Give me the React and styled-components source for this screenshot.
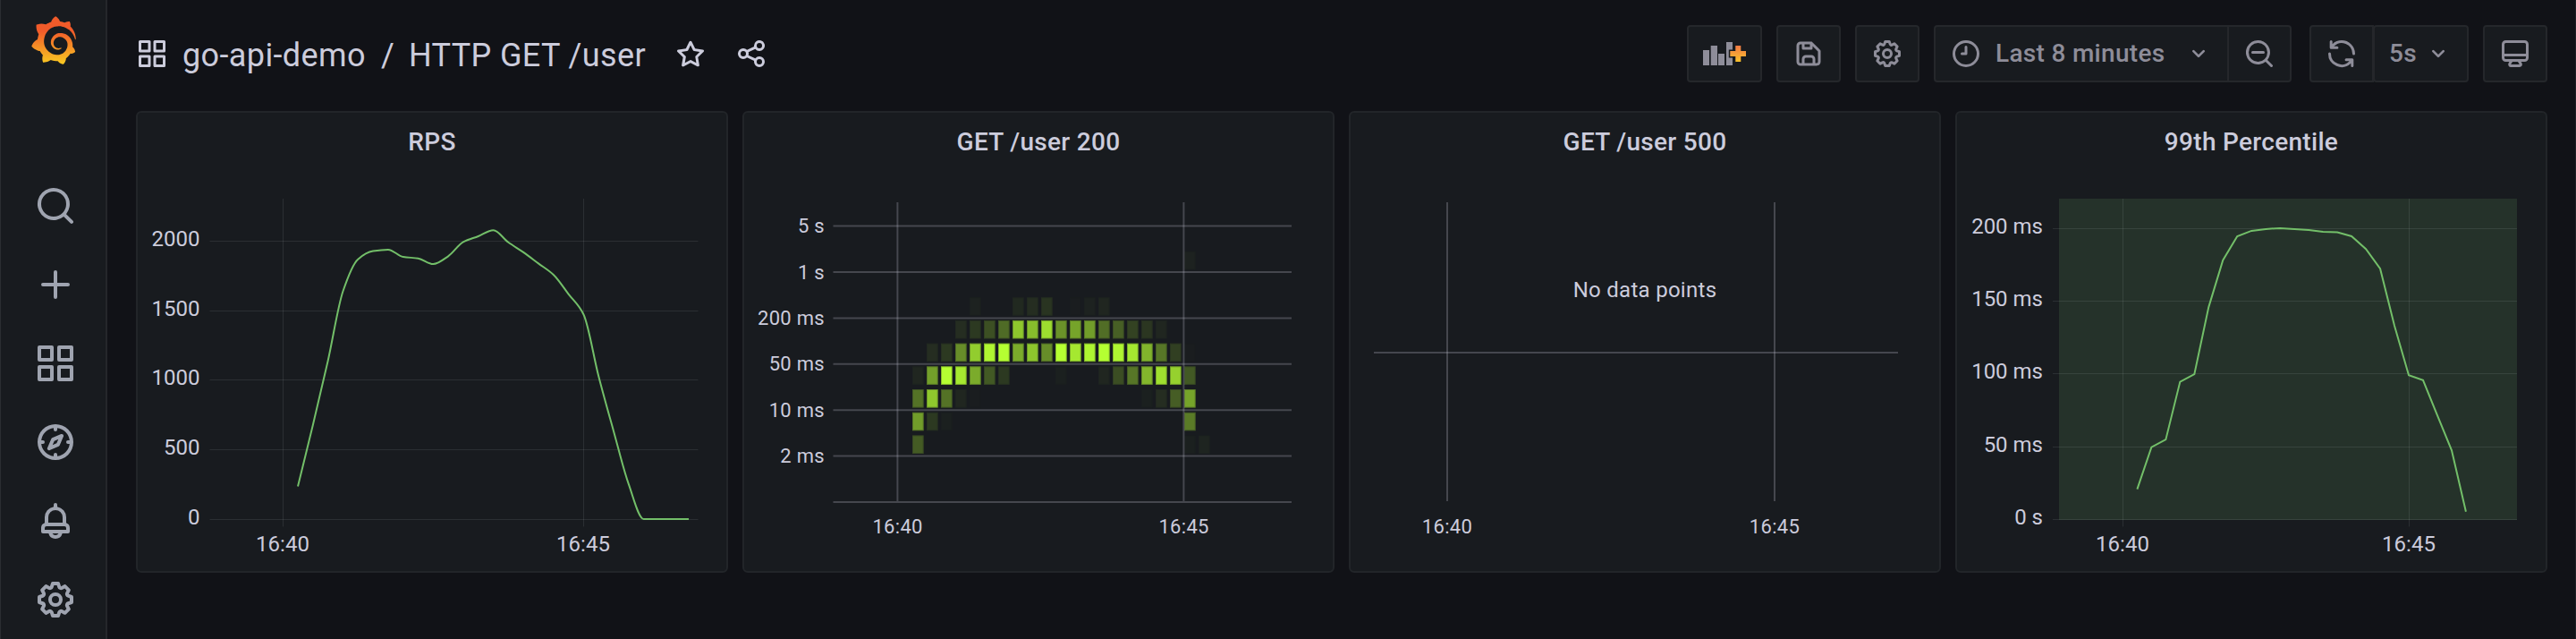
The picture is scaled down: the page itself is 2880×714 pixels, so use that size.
import React from 'react';
import styled, { createGlobalStyle, css } from 'styled-components';

const GlobalStyle = createGlobalStyle`
  * { box-sizing: border-box; }
  body {
    margin: 0;
    background: #111217;
    color: #ccccdc;
    font-family: Roboto, "Liberation Sans", sans-serif;
    letter-spacing: 0.3px;
    overflow: hidden;
  }
`;

/* ---------- icons ---------- */

const paths = {
  apps: 'M10,13H3a1,1,0,0,0-1,1v7a1,1,0,0,0,1,1h7a1,1,0,0,0,1-1V14A1,1,0,0,0,10,13ZM9,20H4V15H9ZM21,2H14a1,1,0,0,0-1,1v7a1,1,0,0,0,1,1h7a1,1,0,0,0,1-1V3A1,1,0,0,0,21,2ZM20,9H15V4h5Zm1,4H14a1,1,0,0,0-1,1v7a1,1,0,0,0,1,1h7a1,1,0,0,0,1-1V14A1,1,0,0,0,21,13Zm-1,7H15V15h5ZM10,2H3A1,1,0,0,0,2,3v7a1,1,0,0,0,1,1h7a1,1,0,0,0,1-1V3A1,1,0,0,0,10,2ZM9,9H4V4H9Z',
  search: 'M21.71,20.29,18,16.61A9,9,0,1,0,16.61,18l3.68,3.68a1,1,0,0,0,1.42,0A1,1,0,0,0,21.71,20.29ZM11,18a7,7,0,1,1,7-7A7,7,0,0,1,11,18Z',
  plus: 'M19,11H13V5a1,1,0,0,0-2,0v6H5a1,1,0,0,0,0,2h6v6a1,1,0,0,0,2,0V13h6a1,1,0,0,0,0-2Z',
  compass: 'M12,2A10,10,0,1,0,22,12,10,10,0,0,0,12,2Zm1,17.93V19a1,1,0,0,0-2,0v.93A8,8,0,0,1,4.07,13H5a1,1,0,0,0,0-2H4.07A8,8,0,0,1,11,4.07V5a1,1,0,0,0,2,0V4.07A8,8,0,0,1,19.93,11H19a1,1,0,0,0,0,2h.93A8,8,0,0,1,13,19.93ZM15.14,7.55l-5,2.12a1,1,0,0,0-.52.52l-2.12,5a1,1,0,0,0,.21,1.1,1,1,0,0,0,.7.3.93.93,0,0,0,.4-.09l5-2.12a1,1,0,0,0,.52-.52l2.12-5a1,1,0,0,0-1.31-1.31Zm-2.49,5.1-2.28,1,1-2.28,2.28-1Z',
  bell: 'M18,13.18V10a6,6,0,0,0-5-5.91V3a1,1,0,0,0-2,0V4.09A6,6,0,0,0,6,10v3.18A3,3,0,0,0,4,16v2a1,1,0,0,0,1,1H8.14a4,4,0,0,0,7.72,0H19a1,1,0,0,0,1-1V16A3,3,0,0,0,18,13.18ZM8,10a4,4,0,0,1,8,0v3H8Zm4,10a2,2,0,0,1-1.72-1h3.44A2,2,0,0,1,12,20Zm6-3H6V16a1,1,0,0,1,1-1H17a1,1,0,0,1,1,1Z',
  cog: 'M21.32,9.55l-1.89-.63.89-1.78A1,1,0,0,0,20.13,6L18,3.87a1,1,0,0,0-1.15-.19l-1.78.89-.63-1.89A1,1,0,0,0,13.5,2h-3a1,1,0,0,0-.95.68L8.92,4.57,7.14,3.68A1,1,0,0,0,6,3.87L3.87,6a1,1,0,0,0-.19,1.15l.89,1.78-1.89.63A1,1,0,0,0,2,10.5v3a1,1,0,0,0,.68.95l1.89.63-.89,1.78A1,1,0,0,0,3.87,18L6,20.13a1,1,0,0,0,1.15.19l1.78-.89.63,1.89a1,1,0,0,0,.95.68h3a1,1,0,0,0,.95-.68l.63-1.89,1.78.89A1,1,0,0,0,18,20.13L20.13,18a1,1,0,0,0,.19-1.15l-.89-1.78,1.89-.63A1,1,0,0,0,22,13.5v-3A1,1,0,0,0,21.32,9.55ZM20,12.78l-1.2.4A2,2,0,0,0,17.64,16l.57,1.14-1.1,1.1L16,17.64a2,2,0,0,0-2.79,1.16l-.4,1.2H11.22l-.4-1.2A2,2,0,0,0,8,17.64l-1.14.57-1.1-1.1L6.36,16A2,2,0,0,0,5.2,13.18L4,12.78V11.22l1.2-.4A2,2,0,0,0,6.36,8L5.79,6.89l1.1-1.1L8,6.36A2,2,0,0,0,10.82,5.2l.4-1.2h1.56l.4,1.2A2,2,0,0,0,16,6.36l1.14-.57,1.1,1.1L17.64,8a2,2,0,0,0,1.16,2.79l1.2.4ZM12,8a4,4,0,1,0,4,4A4,4,0,0,0,12,8Zm0,6a2,2,0,1,1,2-2A2,2,0,0,1,12,14Z',
  star: 'M22,9.67A1,1,0,0,0,21.14,9l-5.69-.83L12.9,3a1,1,0,0,0-1.8,0L8.55,8.16,2.86,9a1,1,0,0,0-.81.68,1,1,0,0,0,.25,1l4.13,4-1,5.68A1,1,0,0,0,6.9,21.44L12,18.77l5.1,2.67a.93.93,0,0,0,.46.12,1,1,0,0,0,.59-.19,1,1,0,0,0,.4-1l-1-5.68,4.13-4A1,1,0,0,0,22,9.67Zm-6.15,4a1,1,0,0,0-.29.88l.72,4.2-3.76-2a1.06,1.06,0,0,0-.94,0l-3.76,2,.72-4.2a1,1,0,0,0-.29-.88l-3-3,4.21-.61a1,1,0,0,0,.76-.55L12,5.7l1.88,3.82a1,1,0,0,0,.76.55l4.21.61Z',
  share: 'M18,14a4,4,0,0,0-3.08,1.48l-5.1-2.35a3.64,3.64,0,0,0,0-2.26l5.1-2.35A4,4,0,1,0,14,6a4.17,4.17,0,0,0,.07.71L8.79,9.14a4,4,0,1,0,0,5.72l5.28,2.43A4.17,4.17,0,0,0,14,18a4,4,0,1,0,4-4ZM18,4a2,2,0,1,1-2,2A2,2,0,0,1,18,4ZM6,14a2,2,0,1,1,2-2A2,2,0,0,1,6,14Zm12,6a2,2,0,1,1,2-2A2,2,0,0,1,18,20Z',
  save: 'M20.71,9.29l-6-6a1,1,0,0,0-.32-.21A1.09,1.09,0,0,0,14,3H6A3,3,0,0,0,3,6V18a3,3,0,0,0,3,3H18a3,3,0,0,0,3-3V10A1,1,0,0,0,20.71,9.29ZM9,5h4V7H9Zm6,14H9V16a1,1,0,0,1,1-1h4a1,1,0,0,1,1,1Zm4-1a1,1,0,0,1-1,1H17V16a3,3,0,0,0-3-3H10a3,3,0,0,0-3,3v3H6a1,1,0,0,1-1-1V6A1,1,0,0,1,6,5H7V8A1,1,0,0,0,8,9h6a1,1,0,0,0,1-1V6.41l4,4Z',
  clock: 'M12,6a1,1,0,0,0-1,1v4H9a1,1,0,0,0,0,2h3a1,1,0,0,0,1-1V7A1,1,0,0,0,12,6Zm0-4A10,10,0,1,0,22,12,10,10,0,0,0,12,2Zm0,18a8,8,0,1,1,8-8A8,8,0,0,1,12,20Z',
  angleDown: 'M17,9.17a1,1,0,0,0-1.41,0L12,12.71,8.46,9.17a1,1,0,0,0-1.41,0,1,1,0,0,0,0,1.42l4.24,4.24a1,1,0,0,0,1.42,0L17,10.59A1,1,0,0,0,17,9.17Z',
  searchMinus: 'M21.71,20.29,18,16.61A9,9,0,1,0,16.61,18l3.68,3.68a1,1,0,0,0,1.42,0A1,1,0,0,0,21.71,20.29ZM11,18a7,7,0,1,1,7-7A7,7,0,0,1,11,18Zm4-8H7a1,1,0,0,0,0,2h8a1,1,0,0,0,0-2Z',
  sync: 'M19.91,15.51H15.38a1,1,0,0,0,0,2h2.4A8,8,0,0,1,4,12a1,1,0,1,0-2,0,10,10,0,0,0,16.88,7.23V21a1,1,0,0,0,2,0V16.5A1,1,0,0,0,19.91,15.51ZM12,2A10,10,0,0,0,5.12,4.77V3a1,1,0,0,0-2,0V7.5a1,1,0,0,0,1,1h4.5a1,1,0,0,0,0-2H6.22A8,8,0,0,1,20,12a1,1,0,0,0,2,0A10,10,0,0,0,12,2Z',
  monitor: 'M19,2H5A3,3,0,0,0,2,5V15a3,3,0,0,0,3,3H7.64l-.58,1a2,2,0,0,0,0,2,2,2,0,0,0,1.75,1h6.46A2,2,0,0,0,17,21a2,2,0,0,0,0-2l-.59-1H19a3,3,0,0,0,3-3V5A3,3,0,0,0,19,2ZM8.77,20,10,18H14l1.2,2ZM20,15a1,1,0,0,1-1,1H5a1,1,0,0,1-1-1V14H20Zm0-3H4V5A1,1,0,0,1,5,4H19a1,1,0,0,1,1,1Z',
};

const IconSvg = styled.svg`
  display: block;
  flex: none;
  width: ${(p) => p.$size}px;
  height: ${(p) => p.$size}px;
  fill: currentColor;
`;

const Icon = ({ name, size = 36 }) => (
  <IconSvg $size={size} viewBox="0 0 24 24">
    <path d={paths[name]} />
  </IconSvg>
);

const LOGO =
  'M342,161.2c-0.6-6.1-1.6-13.1-3.6-20.9c-2-7.7-5-16.2-9.4-25c-4.4-8.8-10.1-17.9-17.5-26.8c-2.9-3.5-6.1-6.9-9.5-10.2c5.1-20.3-6.2-37.9-6.2-37.9c-19.5-1.2-31.9,6.1-36.5,9.4c-0.8-0.3-1.5-0.7-2.3-1c-3.3-1.3-6.7-2.6-10.3-3.7c-3.5-1.1-7.1-2.1-10.8-3c-3.7-0.9-7.4-1.6-11.2-2.2c-0.7-0.1-1.3-0.2-2-0.3c-8.5-27.2-32.9-38.6-32.9-38.6c-27.3,17.3-32.4,41.5-32.4,41.5s-0.1,0.5-0.3,1.4c-1.5,0.4-3,0.9-4.5,1.3c-2.1,0.6-4.2,1.4-6.2,2.2c-2.1,0.8-4.1,1.6-6.2,2.5c-4.1,1.8-8.2,3.8-12.2,6c-3.9,2.2-7.7,4.6-11.4,7.1c-0.5-0.2-1-0.4-1-0.4c-37.8-14.4-71.3,2.9-71.3,2.9c-3.1,40.2,15.1,65.5,18.7,70.1c-0.9,2.5-1.7,5-2.5,7.5c-2.8,9.1-4.9,18.4-6.2,28.1c-0.2,1.4-0.4,2.8-0.5,4.2C18.8,192.7,8.5,228,8.5,228c29.1,33.5,63.1,35.6,63.1,35.6c0,0,0.1-0.1,0.1-0.1c4.3,7.7,9.3,15,14.9,21.9c2.4,2.9,4.8,5.6,7.4,8.3c-10.6,30.4,1.5,55.6,1.5,55.6c32.4,1.2,53.7-14.2,58.2-17.7c3.2,1.1,6.5,2.1,9.8,2.9c10,2.6,20.2,4.1,30.4,4.5c2.5,0.1,5.1,0.2,7.6,0.1l1.2,0l0.8,0l1.6,0l1.6-0.1l0,0.1c15.3,21.8,42.1,24.9,42.1,24.9c19.1-20.1,20.2-40.1,20.2-44.4l0,0c0,0,0-0.1,0-0.3c0-0.4,0-0.6,0-0.6l0,0c0-0.3,0-0.6,0-0.9c4-2.8,7.8-5.8,11.4-9.1c7.6-6.9,14.3-14.8,19.9-23.3c0.5-0.8,1-1.6,1.5-2.4c21.6,1.2,36.9-13.4,36.9-13.4c-3.6-22.5-16.4-33.5-19.1-35.6l0,0c0,0-0.1-0.1-0.3-0.2c-0.2-0.1-0.2-0.2-0.2-0.2c0,0,0,0,0,0c-0.1-0.1-0.3-0.2-0.5-0.3c0.1-1.4,0.2-2.7,0.3-4.1c0.2-2.4,0.2-4.9,0.2-7.3l0-1.8l0-0.9l0-0.5c0-0.6,0-0.4,0-0.6l-0.1-1.5l-0.1-2c0-0.7-0.1-1.3-0.2-1.9c-0.1-0.6-0.1-1.3-0.2-1.9l-0.2-1.9l-0.3-1.9c-0.4-2.5-0.8-4.9-1.4-7.4c-2.3-9.7-6.1-18.9-11-27.2c-5-8.3-11.2-15.6-18.3-21.8c-7-6.2-14.9-11.2-23.1-14.9c-8.3-3.7-16.9-6.1-25.5-7.2c-4.3-0.6-8.6-0.8-12.9-0.7l-1.6,0l-0.4,0c-0.1,0-0.6,0-0.5,0l-0.7,0l-1.6,0.1c-0.6,0-1.2,0.1-1.7,0.1c-2.2,0.2-4.4,0.5-6.5,0.9c-8.6,1.6-16.7,4.7-23.8,9c-7.1,4.3-13.3,9.6-18.3,15.6c-5,6-8.9,12.7-11.6,19.6c-2.7,6.9-4.2,14.1-4.6,21c-0.1,1.7-0.1,3.5-0.1,5.2c0,0.4,0,0.9,0,1.3l0.1,1.4c0.1,0.8,0.1,1.7,0.2,2.5c0.3,3.5,1,6.9,1.9,10.1c1.9,6.5,4.9,12.4,8.6,17.4c3.7,5,8.2,9.1,12.9,12.4c4.7,3.2,9.8,5.5,14.8,7c5,1.5,10,2.1,14.7,2.1c0.6,0,1.2,0,1.7,0c0.3,0,0.6,0,0.9,0c0.3,0,0.6,0,0.9-0.1c0.5,0,1-0.1,1.5-0.1c0.1,0,0.3,0,0.4-0.1l0.5-0.1c0.3,0,0.6-0.1,0.9-0.1c0.6-0.1,1.1-0.2,1.7-0.3c0.6-0.1,1.1-0.2,1.6-0.4c1.1-0.2,2.1-0.6,3.1-0.9c2-0.7,4-1.5,5.7-2.4c1.8-0.9,3.4-2,5-3c0.4-0.3,0.9-0.6,1.3-1c1.6-1.3,1.9-3.7,0.6-5.3c-1.1-1.4-3.1-1.8-4.7-0.9c-0.4,0.2-0.8,0.4-1.2,0.6c-1.4,0.7-2.8,1.3-4.3,1.8c-1.5,0.5-3.1,0.9-4.7,1.2c-0.8,0.1-1.6,0.2-2.5,0.3c-0.4,0-0.8,0.1-1.3,0.1c-0.4,0-0.9,0-1.2,0c-0.4,0-0.8,0-1.2,0c-0.5,0-1,0-1.5-0.1c0,0-0.3,0-0.1,0l-0.2,0l-0.3,0c-0.2,0-0.5,0-0.7-0.1c-0.5-0.1-0.9-0.1-1.4-0.2c-3.7-0.5-7.4-1.6-10.9-3.2c-3.6-1.6-7-3.8-10.1-6.6c-3.1-2.8-5.8-6.1-7.9-9.9c-2.1-3.8-3.6-8-4.3-12.4c-0.3-2.2-0.5-4.5-0.4-6.7c0-0.6,0.1-1.2,0.1-1.8c0,0.2,0-0.1,0-0.1l0-0.2l0-0.5c0-0.3,0.1-0.6,0.1-0.9c0.1-1.2,0.3-2.4,0.5-3.6c1.7-9.6,6.5-19,13.9-26.1c1.9-1.8,3.9-3.4,6-4.9c2.1-1.5,4.4-2.8,6.8-3.9c2.4-1.1,4.8-2,7.4-2.7c2.5-0.7,5.1-1.1,7.8-1.4c1.3-0.1,2.6-0.2,4-0.2c0.4,0,0.6,0,0.9,0l1.1,0l0.7,0c0.3,0,0,0,0.1,0l0.3,0l1.1,0.1c2.9,0.2,5.7,0.6,8.5,1.3c5.6,1.2,11.1,3.3,16.2,6.1c10.2,5.7,18.9,14.5,24.2,25.1c2.7,5.3,4.6,11,5.5,16.9c0.2,1.5,0.4,3,0.5,4.5l0.1,1.1l0.1,1.1c0,0.4,0,0.8,0,1.1c0,0.4,0,0.8,0,1.1l0,1l0,1.1c0,0.7-0.1,1.9-0.1,2.6c-0.1,1.6-0.3,3.3-0.5,4.9c-0.2,1.6-0.5,3.2-0.8,4.8c-0.3,1.6-0.7,3.2-1.1,4.7c-0.8,3.1-1.8,6.2-3,9.3c-2.4,6-5.6,11.8-9.4,17.1c-7.7,10.6-18.2,19.2-30.2,24.7c-6,2.7-12.3,4.7-18.8,5.7c-3.2,0.6-6.5,0.9-9.8,1l-0.6,0l-0.5,0l-1.1,0l-1.6,0l-0.8,0c0.4,0-0.1,0-0.1,0l-0.3,0c-1.8,0-3.5-0.1-5.3-0.3c-7-0.5-13.9-1.8-20.7-3.7c-6.7-1.9-13.2-4.6-19.4-7.8c-12.3-6.6-23.4-15.6-32-26.5c-4.3-5.4-8.1-11.3-11.2-17.4c-3.1-6.1-5.6-12.6-7.4-19.1c-1.8-6.6-2.9-13.3-3.4-20.1l-0.1-1.3l0-0.3l0-0.3l0-0.6l0-1.1l0-0.3l0-0.4l0-0.8l0-1.6l0-0.3c0,0,0,0.1,0-0.1l0-0.6c0-0.8,0-1.7,0-2.5c0.1-3.3,0.4-6.8,0.8-10.2c0.4-3.4,1-6.9,1.7-10.3c0.7-3.4,1.5-6.8,2.5-10.2c1.9-6.7,4.3-13.2,7.1-19.3c5.7-12.2,13.1-23.1,22-31.8c2.2-2.2,4.5-4.2,6.9-6.2c2.4-1.9,4.9-3.7,7.5-5.4c2.5-1.7,5.2-3.2,7.9-4.6c1.3-0.7,2.7-1.4,4.1-2c0.7-0.3,1.4-0.6,2.1-0.9c0.7-0.3,1.4-0.6,2.1-0.9c2.8-1.2,5.7-2.2,8.7-3.1c0.7-0.2,1.5-0.4,2.2-0.7c0.7-0.2,1.5-0.4,2.2-0.6c1.5-0.4,3-0.8,4.5-1.1c0.7-0.2,1.5-0.3,2.3-0.5c0.8-0.2,1.5-0.3,2.3-0.5c0.8-0.1,1.5-0.3,2.3-0.4l1.1-0.2l1.2-0.2c0.8-0.1,1.5-0.2,2.3-0.3c0.9-0.1,1.7-0.2,2.6-0.3c0.7-0.1,1.9-0.2,2.6-0.3c0.5-0.1,1.1-0.1,1.6-0.2l1.1-0.1l0.5-0.1l0.6,0c0.9-0.1,1.7-0.1,2.6-0.2l1.3-0.1c0,0,0.5,0,0.1,0l0.3,0l0.6,0c0.7,0,1.5-0.1,2.2-0.1c2.9-0.1,5.9-0.1,8.8,0c5.8,0.2,11.5,0.9,17,1.9c11.1,2.1,21.5,5.6,31,10.3c9.5,4.6,17.9,10.3,25.3,16.5c0.5,0.4,0.9,0.8,1.4,1.2c0.4,0.4,0.9,0.8,1.3,1.2c0.9,0.8,1.7,1.6,2.6,2.4c0.9,0.8,1.7,1.6,2.5,2.4c0.8,0.8,1.6,1.6,2.4,2.5c3.1,3.3,6,6.6,8.6,10c5.2,6.7,9.4,13.5,12.7,19.9c0.2,0.4,0.4,0.8,0.6,1.2c0.2,0.4,0.4,0.8,0.6,1.2c0.4,0.8,0.8,1.6,1.1,2.4c0.4,0.8,0.7,1.5,1.1,2.3c0.3,0.8,0.7,1.5,1,2.3c1.2,3,2.4,5.9,3.3,8.6c1.5,4.4,2.6,8.3,3.5,11.7c0.3,1.4,1.6,2.3,3,2.1c1.5-0.1,2.6-1.3,2.6-2.8C342.6,170.4,342.5,166.1,342,161.2z';

const LogoSvg = styled.svg`
  display: block;
  width: 52px;
  height: 54px;
  margin: 18px 4px 114px 0;
`;

const Logo = () => (
  <LogoSvg viewBox="0 0 351 365">
    <defs>
      <linearGradient id="logo" gradientUnits="userSpaceOnUse" x1="175.5" y1="445.5" x2="175.5" y2="114">
        <stop offset="0" stopColor="#fcee1f" />
        <stop offset="1" stopColor="#f15b2a" />
      </linearGradient>
    </defs>
    <path fill="url(#logo)" d={LOGO} />
  </LogoSvg>
);

const AddPanelSvg = styled.svg`
  display: block;
  width: 48px;
  height: 36px;
`;

const AddPanelIcon = () => (
  <AddPanelSvg viewBox="0 0 48 36">
    <defs>
      <linearGradient id="add" x1="0" y1="0" x2="0" y2="1">
        <stop offset="0" stopColor="#f27a45" />
        <stop offset="1" stopColor="#fbc22b" />
      </linearGradient>
    </defs>
    <g fill="currentColor">
      <path d="M0 14h7v17H0zM8.700 9H16v22H8.700zM17 18h7v13h-7zM26 5h7v26h-7z" />
    </g>
    <path
      d="M36.300 9h6v6h6v6h-6v6h-6v-6h-6v-6h6z"
      fill="url(#add)"
      stroke="#181b1f"
      strokeWidth="3"
      paintOrder="stroke"
    />
  </AddPanelSvg>
);

/* ---------- page frame ---------- */

const Page = styled.div`
  display: flex;
  height: 714px;
  border-right: 1px solid #1f2025;
  background: #111217;
`;

const Sidebar = styled.nav`
  flex: none;
  display: flex;
  flex-direction: column;
  align-items: center;
  width: 120px;
  height: 714px;
  padding-left: 5px;
  background: #181b1f;
  border-left: 1px solid #2b2e32;
  border-right: 2px solid #25272b;
  color: #9fa4b0;
`;

const NavItem = styled.a`
  display: flex;
  align-items: center;
  justify-content: center;
  height: 88px;
`;

const Main = styled.main`
  flex: 1;
  padding: 28px 31px 0 32px;
`;

const Header = styled.header`
  display: flex;
  align-items: center;
  height: 64px;
  margin-bottom: 32px;
`;

const Crumbs = styled.h1`
  display: flex;
  align-items: center;
  margin: 0;
  font-size: 36px;
  font-weight: 400;
  line-height: 44px;
  letter-spacing: 0.38px;
`;

const Crumb = styled.span`
  padding-top: 3px;
  margin-left: ${(p) => p.$gap}px;
  width: ${(p) => p.$width}px;
  white-space: nowrap;
`;

const HeaderAction = styled.span`
  margin-left: 32px;
`;

const Tools = styled.div`
  display: flex;
  gap: 16px;
  margin-left: auto;
`;

const ButtonGroup = styled.div`
  display: flex;
  margin-right: ${(p) => p.$after || 0}px;
`;

const ToolButton = styled.button`
  display: flex;
  align-items: center;
  justify-content: ${(p) => (p.$spread ? 'flex-start' : 'center')};
  width: ${(p) => p.$width || 72}px;
  height: 64px;
  padding: 0 ${(p) => (p.$spread ? 16 : 0)}px;
  border: 2px solid #25272b;
  border-radius: 4px;
  background: #181b1f;
  color: #8e8d99;
  font: 500 28px/40px Roboto, "Liberation Sans", sans-serif;
  letter-spacing: 0.3px;
  ${(p) => p.$joined === 'start' && css`
    border-radius: 4px 0 0 4px;
  `}
  ${(p) => p.$open && css`
    border-right: 0;
  `}
  ${(p) => p.$overlap && css`
    margin-left: -1px;
  `}
  ${(p) => p.$joined === 'end' && css`
    border-radius: 0 4px 4px 0;
  `}
`;

const ButtonText = styled.span`
  margin: 0 auto 0 ${(p) => p.$gap || 0}px;
  white-space: nowrap;
`;

const Grid = styled.section`
  display: grid;
  grid-template-columns: repeat(4, 662px);
  gap: 16px;
`;

const Panel = styled.article`
  height: 516px;
  border: 2px solid #222529;
  border-radius: 6px;
  background: #181b1f;
`;

const PanelTitle = styled.h2`
  margin: 0;
  height: 64px;
  font-size: 28px;
  font-weight: 500;
  line-height: 65px;
  text-align: center;
  letter-spacing: 0.3px;
`;

/* ---------- charts (coordinates are relative to the panel corner) ---------- */

const ChartSvg = styled.svg`
  display: block;
  width: 658px;
  height: 448px;
`;

const AxisText = styled.text`
  fill: #ccccdc;
  font-size: ${(p) => (p.$small ? 22 : 24)}px;
  letter-spacing: ${(p) => (p.$small ? 0.3 : 0)}px;
  text-anchor: ${(p) => p.$anchor || 'middle'};
`;

const EmptyText = styled(AxisText)`
  letter-spacing: 0.28px;
`;

const Chart = ({ children }) => <ChartSvg viewBox="2 66 658 448">{children}</ChartSvg>;

const FineGrid = ({ left, right, rows, columns }) => (
  <g fill="rgba(240,250,255,0.09)">
    {rows.map((y) => (
      <rect key={y} x={left} y={y} width={right - left} height="1" />
    ))}
    {columns.map((x) => (
      <rect key={x} x={x} y="98" width="1" height="366.5" />
    ))}
  </g>
);

const XLabels = ({ at, y, small }) => (
  <>
    <AxisText x={at[0]} y={y} $small={small}>16:40</AxisText>
    <AxisText x={at[1]} y={y} $small={small}>16:45</AxisText>
  </>
);

const YLabels = ({ x, items, small }) =>
  items.map(([label, y]) => (
    <AxisText key={label} x={x} y={y} $anchor="end" $small={small}>{label}</AxisText>
  ));

const series = (ys, x0, step) => ys.map((y, i) => [x0 + i * step, y]);

// Monotone cubic interpolation through evenly spaced points.
const smoothPath = (pts) => {
  const n = pts.length;
  const h = pts[1][0] - pts[0][0];
  const d = pts.slice(1).map((p, i) => (p[1] - pts[i][1]) / h);
  const m = pts.map((_, i) => {
    if (i === 0) return d[0];
    if (i === n - 1) return d[n - 2];
    return d[i - 1] * d[i] <= 0 ? 0 : (2 * d[i - 1] * d[i]) / (d[i - 1] + d[i]);
  });
  return pts.reduce((path, [x, y], i) => {
    if (i === 0) return `M${x},${y}`;
    const [px, py] = pts[i - 1];
    return `${path}C${px + h / 3},${py + (m[i - 1] * h) / 3} ${x - h / 3},${y - (m[i] * h) / 3} ${x},${y}`;
  }, '');
};

const rps = series(
  [419.6, 351, 279.3, 201.5, 165.7, 156.6, 154.9, 163, 164.7, 171.1, 162.3, 146.4, 140, 133.3, 146.8, 157.9,
    170.4, 183, 204.6, 227.2, 296.2, 357.7, 416.9, 456, 456, 456, 456],
  181, 16.81,
);

const p99 = series(
  [422.6, 375.7, 367.2, 302.6, 294.2, 219.1, 166.7, 140, 133.9, 131.9, 130.9, 131.9, 132.9, 134.9, 135.6, 140,
    154.2, 176.2, 240.1, 295.2, 300.9, 340.1, 379, 447.7],
  203.4, 15.98,
);

const RpsChart = () => (
  <Chart>
    <FineGrid left={82.5} right={628.5} rows={[145, 223, 300, 378, 456]} columns={[164, 500]} />
    <path d={smoothPath(rps)} fill="none" stroke="#73bf69" strokeWidth="2" />
    <YLabels x={71.5} items={[['2000', 151], ['1500', 229], ['1000', 306], ['500', 384], ['0', 462]]} />
    <XLabels at={[164, 500]} y={492} />
  </Chart>
);

const PercentileChart = () => (
  <Chart>
    <rect x="116" y="98" width="512" height="359" fill="rgba(115,191,105,0.15)" />
    <FineGrid left={109} right={628} rows={[131, 212, 293, 375, 456]} columns={[187, 507]} />
    <polyline points={p99.join(' ')} fill="none" stroke="#73bf69" strokeWidth="2" />
    <YLabels
      x={98}
      items={[['200 ms', 137], ['150 ms', 218], ['100 ms', 299], ['50 ms', 381], ['0 s', 462]]}
    />
    <XLabels at={[187, 507]} y={492} />
  </Chart>
);

const HEAT_TOP = 156.8;
const HEAT_ROW = 25.7;

// Each row: bucket index from the top, then column -> intensity.
const heat = [
  [0, { 19: 0.03 }],
  [2, { 4: 0.03, 7: 0.06, 8: 0.08, 9: 0.11, 11: 0.01, 12: 0.03, 13: 0.05 }],
  [3, { 3: 0.08, 4: 0.13, 5: 0.23, 6: 0.35, 7: 0.75, 8: 0.71, 9: 0.85, 10: 0.52, 11: 0.6, 12: 0.57, 13: 0.36, 14: 0.3, 15: 0.17, 16: 0.12, 17: 0.05 }],
  [4, { 1: 0.08, 2: 0.13, 3: 0.5, 4: 0.78, 5: 0.96, 6: 1, 7: 0.63, 8: 0.75, 9: 0.5, 10: 1, 11: 0.9, 12: 0.95, 13: 1, 14: 0.96, 15: 0.9, 16: 0.67, 17: 0.4, 18: 0.16, 19: 0.01 }],
  [5, { 0: 0.05, 1: 0.58, 2: 1, 3: 0.9, 4: 0.63, 5: 0.27, 6: 0.13, 10: 0.02, 13: 0.05, 14: 0.22, 15: 0.4, 16: 0.68, 17: 0.86, 18: 0.8, 19: 0.27 }],
  [6, { 0: 0.38, 1: 0.76, 2: 0.38, 3: 0.05, 4: 0.01, 16: 0.02, 17: 0.08, 18: 0.29, 19: 0.6 }],
  [7, { 0: 0.57, 1: 0.13, 2: 0.02, 19: 0.42 }],
  [8, { 0: 0.28, 19: 0.02, 20: 0.04 }],
];

const shade = (t) => {
  const from = [24, 27, 31];
  const to = [181, 255, 50];
  return `rgb(${from.map((c, i) => Math.round(c + (to[i] - c) * t)).join(',')})`;
};

const heatLines = ['5 s', '1 s', '200 ms', '50 ms', '10 ms', '2 ms', ''].map((label, i) => [label, 128.6 + i * 51.4]);

const HeatmapChart = () => (
  <Chart>
    {heat.map(([row, cells]) =>
      Object.entries(cells).map(([col, t]) => (
        <rect
          key={`${row}-${col}`}
          x={190.5 + col * 16}
          y={HEAT_TOP + row * HEAT_ROW + 0.5}
          width="11.7"
          height="19.6"
          fill={shade(t)}
          stroke={shade(t * 0.7)}
        />
      )),
    )}
    <g stroke="rgba(204,204,220,0.25)" strokeWidth="2">
      {heatLines.map(([, y]) => (
        <line key={y} x1="101.5" x2="614" y1={y} y2={y} />
      ))}
      <line x1="173.4" x2="173.4" y1="102" y2="436" />
      <line x1="493.4" x2="493.4" y1="102" y2="436" />
    </g>
    <YLabels x={92} items={heatLines.slice(0, 6).map(([label, y]) => [label, y + 7.6])} small />
    <XLabels at={[173.6, 493.6]} y={472} small />
  </Chart>
);

const EmptyChart = () => (
  <Chart>
    <g stroke="rgba(204,204,220,0.25)" strokeWidth="2">
      <line x1="28" x2="614" y1="270" y2="270" />
      <line x1="110" x2="110" y1="102" y2="436" />
      <line x1="476" x2="476" y1="102" y2="436" />
    </g>
    <EmptyText x="331" y="208">No data points</EmptyText>
    <XLabels at={[110, 476]} y={472} small />
  </Chart>
);

const panels = [
  ['RPS', RpsChart],
  ['GET /user 200', HeatmapChart],
  ['GET /user 500', EmptyChart],
  ['99th Percentile', PercentileChart],
];

const navIcons = ['search', 'plus', 'apps', 'compass', 'bell', 'cog'];

export default function App() {
  return (
    <>
      <GlobalStyle />
      <Page>
        <Sidebar>
          <Logo />
          {navIcons.map((name) => (
            <NavItem key={name}>
              <Icon name={name} size={48} />
            </NavItem>
          ))}
        </Sidebar>
        <Main>
          <Header>
            <Crumbs>
              <Icon name="apps" />
              <Crumb $gap={16} $width={206}>go-api-demo</Crumb>
              <Crumb $gap={16} $width={15}>/</Crumb>
              <Crumb $gap={16} $width={265}>HTTP GET /user</Crumb>
            </Crumbs>
            <HeaderAction><Icon name="star" /></HeaderAction>
            <HeaderAction><Icon name="share" /></HeaderAction>
            <Tools>
              <ToolButton $width={84}><AddPanelIcon /></ToolButton>
              <ToolButton><Icon name="save" /></ToolButton>
              <ToolButton><Icon name="cog" /></ToolButton>
              <ButtonGroup $after={4}>
                <ToolButton $width={328} $spread $joined="start" $open>
                  <Icon name="clock" />
                  <ButtonText $gap={15}>Last 8 minutes</ButtonText>
                  <Icon name="angleDown" size={32} />
                </ToolButton>
                <ToolButton $joined="end"><Icon name="searchMinus" /></ToolButton>
              </ButtonGroup>
              <ButtonGroup>
                <ToolButton $joined="start"><Icon name="sync" /></ToolButton>
                <ToolButton $width={107} $spread $overlap>
                  <ButtonText>5s</ButtonText>
                  <Icon name="angleDown" size={32} />
                </ToolButton>
              </ButtonGroup>
              <ToolButton><Icon name="monitor" /></ToolButton>
            </Tools>
          </Header>
          <Grid>
            {panels.map(([title, Body]) => (
              <Panel key={title}>
                <PanelTitle>{title}</PanelTitle>
                <Body />
              </Panel>
            ))}
          </Grid>
        </Main>
      </Page>
    </>
  );
}
